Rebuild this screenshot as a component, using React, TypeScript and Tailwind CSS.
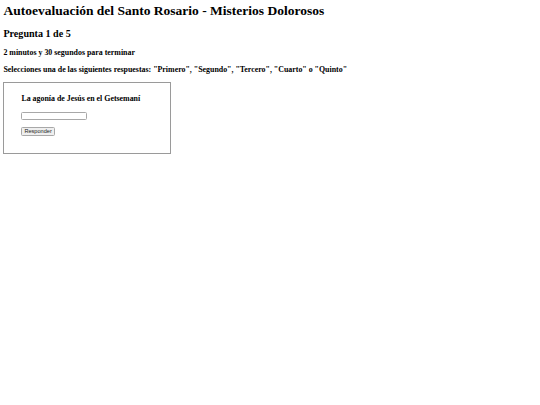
export default function App() {
  return (
    <div className="min-h-[405px] w-[540px] bg-white p-[3.4px] text-black" style={{ fontFamily: '"Liberation Serif", "Times New Roman", serif' }}>
      <h1 className="m-0 text-[13.5px] font-bold leading-[15.5px]">
        Autoevaluación del Santo Rosario - Misterios Dolorosos
      </h1>
      <h2 className="mt-[9px] text-[10.1px] font-bold leading-[11.6px]">Pregunta 1 de 5</h2>
      <h3 className="mt-[8.4px] text-[7.9px] font-bold leading-[9.1px]">2 minutos y 30 segundos para terminar</h3>
      <h3 className="mt-[7.9px] text-[7.9px] font-bold leading-[9.1px]">
        Selecciones una de las siguientes respuestas: "Primero", "Segundo", "Tercero", "Cuarto" o "Quinto"
      </h3>
      <div className="mt-[8.5px] flex h-[72px] w-[168px] flex-col items-start border border-[#9a9a9a] pl-[17px] pt-[10.5px]">
        <h3 className="text-[7.9px] font-bold leading-[9.1px]">La agonía de Jesús en el Getsemaní</h3>
        <input
          type="text"
          className="mt-[8.5px] h-[8.5px] w-[66px] rounded-[1.5px] border border-[#a8a8a8] bg-white"
        />
        <button
          type="button"
          className="mt-[6.5px] h-[9px] rounded-[1.5px] border border-[#a8a8a8] bg-[#efefef] px-[2px] text-[5.6px] leading-[7px] text-[#222]"
          style={{ fontFamily: '"Liberation Sans", Arial, sans-serif' }}
        >
          Responder
        </button>
      </div>
    </div>
  );
}
